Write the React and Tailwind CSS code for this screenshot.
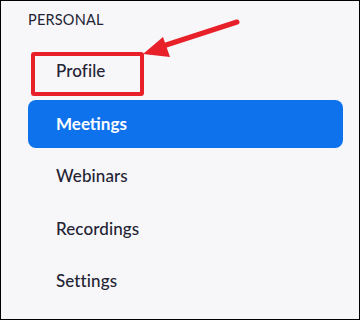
const ITEMS = ['Profile', 'Meetings', 'Webinars', 'Recordings', 'Settings'];

export default function App() {
  return (
    <div
      className="relative w-[360px] h-[320px] overflow-hidden border border-black bg-[#f7f7fa] text-[#232333]"
      style={{ fontFamily: 'Lato, "Noto Sans", sans-serif' }}
    >
      <div className="pl-[27px] pt-[10px] text-[14.5px] leading-[18px] tracking-[0.2px]">PERSONAL</div>

      <ul className="mt-[18px] ml-[27px] mr-[16px] flex flex-col gap-[4.5px]">
        {ITEMS.map((item) => {
          const active = item === 'Meetings';
          return (
            <li
              key={item}
              className={
                active
                  ? 'h-12 flex items-center pl-[28px] rounded-lg bg-[#0e72ed] text-white text-[17px] font-bold'
                  : 'h-12 flex items-center pl-[28px] text-[17px] font-medium tracking-[0.1px]'
              }
            >
              {item}
            </li>
          );
        })}
      </ul>

      {/* highlight box */}
      <div className="absolute left-[30px] top-[51px] w-[113px] h-[44px] border-4 border-[#e8202a] rounded-[3px]" />

      {/* arrow */}
      <svg className="absolute left-0 top-0" width="360" height="320" viewBox="0 0 360 320">
        <line x1="236" y1="21" x2="162" y2="45" stroke="#e8202a" strokeWidth="5" strokeLinecap="round" />
        <polygon points="142,53 162,36 169,56" fill="#e8202a" />
      </svg>
    </div>
  );
}
